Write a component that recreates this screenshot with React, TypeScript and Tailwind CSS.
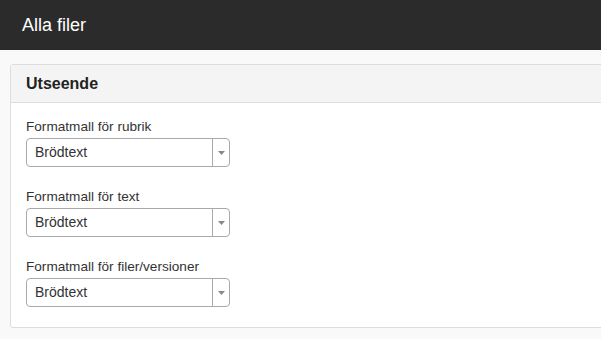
import React from 'react';

const fields = ['Formatmall för rubrik', 'Formatmall för text', 'Formatmall för filer/versioner'];

const Select: React.FC<{ value: string }> = ({ value }) => (
  <div className="flex h-[29px] w-[204px] items-stretch rounded-[4px] border border-[#aaaaaa] bg-white">
    <div className="flex flex-1 items-center pl-[8px] text-[14px] text-[#333333]">{value}</div>
    <div className="flex w-[17px] items-center justify-center border-l border-[#aaaaaa]">
      <svg width="7" height="4" viewBox="0 0 7 4">
        <path d="M0 0 L7 0 L3.5 4 Z" fill="#888888" />
      </svg>
    </div>
  </div>
);

export default function App() {
  return (
    <div
      className="h-[339px] w-[601px] overflow-hidden bg-[#f9f9f9]"
      style={{ fontFamily: '"Liberation Sans", Arial, sans-serif' }}
    >
      {/* Topbar */}
      <div className="flex h-[50px] items-center bg-[#2b2b2b] pl-[22px]">
        <h1 className="text-[18px] text-white">Alla filer</h1>
      </div>

      {/* Panel */}
      <div className="ml-[10px] mt-[14px] w-[620px] rounded-[3px] border border-[#dddddd] bg-white">
        <div className="flex h-[38px] items-center border-b border-[#dddddd] bg-[#f4f4f4] pl-[15px]">
          <h2 className="text-[16px] font-bold text-[#222222]">Utseende</h2>
        </div>
        <div className="flex flex-col gap-[21px] pl-[15px] pt-[15px] pb-[20px]">
          {fields.map((label) => (
            <div key={label} className="flex flex-col">
              <label className="mb-[3px] h-[17px] text-[13.6px] leading-[17px] text-[#333333]">{label}</label>
              <Select value="Brödtext" />
            </div>
          ))}
        </div>
      </div>
    </div>
  );
}
